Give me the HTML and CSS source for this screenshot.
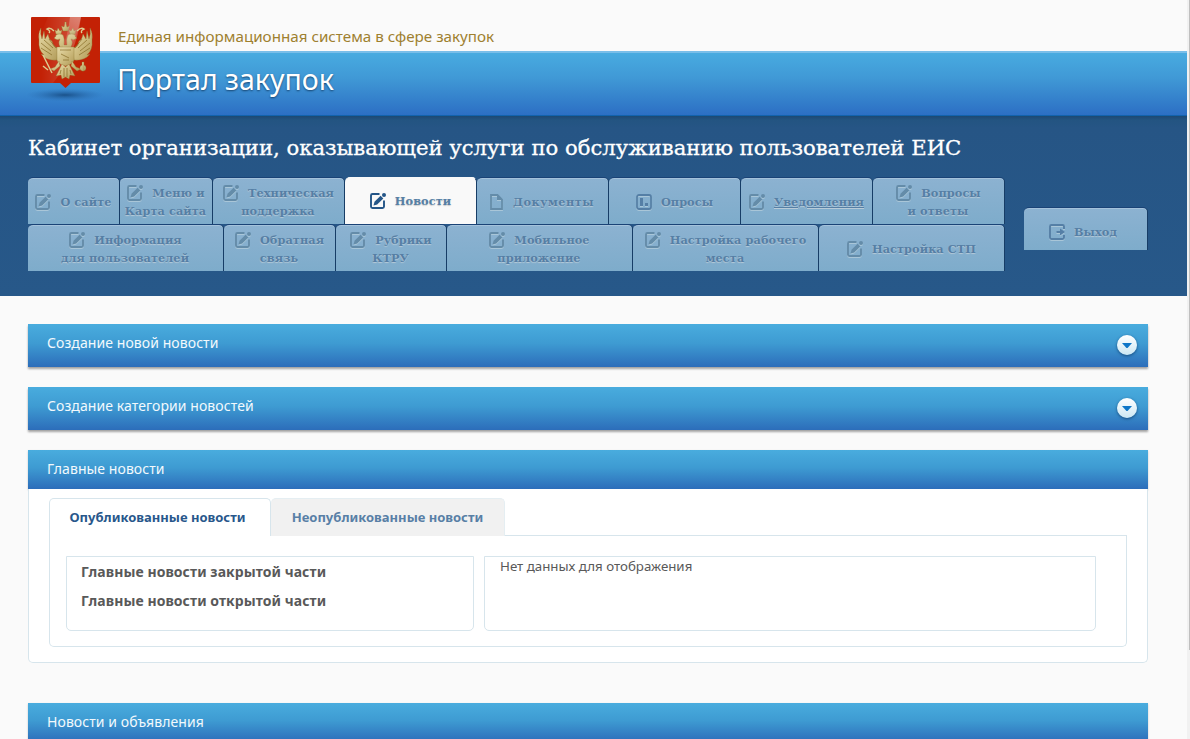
FILE: index.html
```
<!DOCTYPE html>
<html lang="ru">
<head>
<meta charset="utf-8">
<title>Портал закупок</title>
<link rel="stylesheet" href="styles.css">
</head>
<body>
<svg class="defs" width="0" height="0">
  <defs>
    <symbol id="edit" viewBox="0 0 18 18">
      <path d="M10.500 2H3.500Q2 2 2 3.500V14.500Q2 16 3.500 16H13.500Q15 16 15 14.500V8.500" fill="none" stroke="currentColor" stroke-width="1.900"/>
      <path d="M4.500 13.500L5.500 9.800L11.600 3.700L14.300 6.400L8.200 12.500Z" fill="currentColor"/>
      <circle cx="15" cy="3" r="2" fill="currentColor"/>
    </symbol>
    <symbol id="doc" viewBox="0 0 13 18">
      <path d="M1 2H7.500L12 6.500V16H1Z" fill="none" stroke="currentColor" stroke-width="1.800"/>
      <path d="M7 2V7H12Z" fill="currentColor"/>
    </symbol>
    <symbol id="poll" viewBox="0 0 18 18">
      <rect x="2" y="2" width="14" height="14" rx="2" fill="none" stroke="currentColor" stroke-width="1.800"/>
      <path d="M5 5H8V13H5ZM10 10H13V13H10Z" fill="currentColor"/>
    </symbol>
    <symbol id="exit" viewBox="0 0 18 18">
      <path d="M16 6V3.500Q16 2 14.500 2H3.500Q2 2 2 3.500V14.500Q2 16 3.500 16H14.500Q16 16 16 14.500V12" fill="none" stroke="currentColor" stroke-width="1.900"/>
      <path d="M8.500 8H12V5.500L17 9L12 12.500V10H8.500Z" fill="currentColor"/>
    </symbol>
    <linearGradient id="gold" x1="0" y1="0" x2="1" y2="1">
      <stop offset="0" stop-color="#e6daa8"/><stop offset=".5" stop-color="#cfbd80"/><stop offset="1" stop-color="#b09a58"/>
    </linearGradient>
    <linearGradient id="gloss" x1="0" y1="0" x2="0" y2="1">
      <stop offset="0" stop-color="#fff" stop-opacity=".5"/><stop offset="1" stop-color="#fff" stop-opacity=".05"/>
    </linearGradient>
    <linearGradient id="beam" x1="0" y1="0" x2="1" y2="0">
      <stop offset=".2" stop-color="#fff" stop-opacity="0"/><stop offset="1" stop-color="#fff" stop-opacity=".4"/>
    </linearGradient>
    <radialGradient id="shade">
      <stop offset="0" stop-color="#174c83" stop-opacity=".9"/><stop offset="1" stop-color="#2c6fb5" stop-opacity="0"/>
    </radialGradient>
  </defs>
</svg>

<div class="screen">
  <div class="page">
    <header class="header">
      <p class="system">Единая информационная система в сфере закупок</p>
      <p class="portal">Портал закупок</p>
      <svg class="emblem" width="80" height="84" viewBox="0 0 80 84">
        <ellipse cx="39" cy="78" rx="39" ry="6.500" fill="url(#shade)"/>
        <path d="M6 0H73Q74 0 74 1V65Q74 66 73 66H45L39.500 71L34 66H6Q5 66 5 65V1Q5 0 6 0Z" fill="#c32105"/>
        <path d="M22 0H55Q50 38 27 66H5V40Z" fill="url(#beam)" opacity=".6"/>
        <g fill="url(#gold)" stroke="#8d7430" stroke-width=".35">
          <path d="M33 31Q27 31 26 24Q23 23 22 17L19 22L18 14L16 22Q14 17 15 11Q12 16 13 23Q12 33 18 38L15 37Q20 44 31 43Z"/>
          <path d="M46 31Q52 31 53 24Q56 23 57 17L60 22L61 14L63 22Q65 17 64 11Q67 16 66 23Q67 33 61 38L64 37Q59 44 48 43Z"/>
          <path d="M36 33Q31 27 34 22Q31 24 28 21Q30 20 30 18Q33 15 37 18Q39 22 38 28H41Q40 22 42 18Q46 15 49 18Q49 20 51 21Q48 24 45 22Q48 27 43 33Z"/>
          <path d="M31 30H48V43Q47 47 39.500 49Q32 47 31 43Z"/>
          <path d="M36 47L39.500 50L43 47L49 59L44 58L43 62L39.500 60L36 62L35 58L30 59Z"/>
          <path d="M33 44L29 50L24 52L28 54L34 49ZM46 44L50 50L55 52L51 54L45 49Z"/>
          <circle cx="57" cy="51" r="3"/><path d="M56 45H58V54H56Z"/>
          <path d="M37 14L35.500 9L38 10L38.800 7V5H40.200V7L41 10L43.500 9L42 14Z"/>
          <path d="M30 17L29 13L31 14L32 11L34 14L36 13L35 17ZM44 17L43 13L45 14L47 11L48 14L50 13L49 17Z"/>
        </g>
        <g fill="none" stroke="#dccb91">
          <path d="M17 38L26 56M22 53L17 49" stroke-width="1.500"/>
          <path d="M28 14Q24 10 21 12Q25 14 23 16M51 14Q55 10 58 12Q54 14 56 16" stroke-width="1.400"/>
        </g>
        <g fill="none" stroke="#8d7430" stroke-width=".8">
          <path d="M15 26L25 34M15 31L26 38M18 23L27 31M23 22L30 31M64 26L54 34M64 31L53 38M61 23L52 31M56 22L49 31M34 33H45M35 37L43 41M37 43H43M38 51V60M41 51V60M35 53L34 57M44 53L45 57"/>
        </g>
        <path d="M44 0H55Q51 19 44 32L34 36Q42 20 44 0Z" fill="url(#gloss)" opacity=".55"/>
      </svg>
    </header>

    <section class="cabinet">
      <h1 class="cabinet-title">Кабинет организации, оказывающей услуги по обслуживанию пользователей ЕИС</h1>
      <div class="cabinet-body">
        <nav class="menu">
          <div class="menu-row first">
            <a class="tab"><span class="line"><svg class="icon"><use href="#edit"/></svg>О сайте</span></a>
            <a class="tab"><span class="line"><svg class="icon"><use href="#edit"/></svg>Меню и</span><span class="line">Карта сайта</span></a>
            <a class="tab"><span class="line"><svg class="icon"><use href="#edit"/></svg>Техническая</span><span class="line">поддержка</span></a>
            <a class="tab active"><span class="line"><svg class="icon"><use href="#edit"/></svg>Новости</span></a>
            <a class="tab wide"><span class="line"><svg class="icon narrow"><use href="#doc"/></svg>Документы</span></a>
            <a class="tab"><span class="line"><svg class="icon dark"><use href="#poll"/></svg>Опросы</span></a>
            <a class="tab"><span class="line"><svg class="icon"><use href="#edit"/></svg><u>Уведомления</u></span></a>
            <a class="tab"><span class="line"><svg class="icon"><use href="#edit"/></svg>Вопросы</span><span class="line">и ответы</span></a>
          </div>
          <div class="menu-row second">
            <a class="tab"><span class="line"><svg class="icon"><use href="#edit"/></svg>Информация</span><span class="line">для пользователей</span></a>
            <a class="tab"><span class="line"><svg class="icon"><use href="#edit"/></svg>Обратная</span><span class="line">связь</span></a>
            <a class="tab"><span class="line"><svg class="icon"><use href="#edit"/></svg>Рубрики</span><span class="line">КТРУ</span></a>
            <a class="tab"><span class="line"><svg class="icon"><use href="#edit"/></svg>Мобильное</span><span class="line">приложение</span></a>
            <a class="tab"><span class="line"><svg class="icon"><use href="#edit"/></svg>Настройка рабочего</span><span class="line">места</span></a>
            <a class="tab"><span class="line"><svg class="icon"><use href="#edit"/></svg>Настройка СТП</span></a>
          </div>
        </nav>
        <a class="tab logout"><span class="line"><svg class="icon dark"><use href="#exit"/></svg>Выход</span></a>
      </div>
    </section>

    <main class="content">
      <section class="bar"><h2>Создание новой новости</h2><button class="toggle"><svg width="10" height="5" viewBox="0 0 10 5"><path d="M0 0H10L6 4.500Q5 5.500 4 4.500Z" fill="#0d76c8"/></svg></button></section>
      <section class="bar"><h2>Создание категории новостей</h2><button class="toggle"><svg width="10" height="5" viewBox="0 0 10 5"><path d="M0 0H10L6 4.500Q5 5.500 4 4.500Z" fill="#0d76c8"/></svg></button></section>
      <section class="panel">
        <div class="bar open"><h2>Главные новости</h2></div>
        <div class="panel-body">
          <div class="news-tabs">
            <span class="news-tab current">Опубликованные новости</span>
            <span class="news-tab">Неопубликованные новости</span>
            <span class="rule"></span>
          </div>
          <div class="news">
            <div class="box list"><p>Главные новости закрытой части</p><p>Главные новости открытой части</p></div>
            <div class="box empty">Нет данных для отображения</div>
          </div>
        </div>
      </section>
      <section class="bar open"><h2>Новости и объявления</h2></section>
    </main>
  </div>
  <div class="scrollbar"><div class="thumb"></div></div>
</div>
</body>
</html>
```
FILE: styles.css
```
* { box-sizing: border-box; }
body, h1, h2, p { margin: 0; }
body {
  height: 739px;
  overflow: hidden;
  background: #fafafa;
  font-family: "Noto Sans", "Open Sans", sans-serif;
}
.defs { position: absolute; }
.screen { display: flex; height: 739px; overflow: hidden; }
.page { flex: 1; }
.scrollbar { width: 3px; height: 739px; padding-left: 2px; background: #f1f1f1; }
.thumb { height: 650px; background: #bfbfbf; }

.header { position: relative; height: 116px; padding-left: 118px; }
.system {
  height: 51px;
  padding-top: 24px;
  color: #9e802f;
  font-size: 15.2px;
  line-height: 24px;
}
.portal {
  height: 65px;
  margin-left: -118px;
  padding: 6px 0 0 117px;
  border-top: 2px solid #79bee9;
  border-bottom: 1px solid #1263ad;
  background: linear-gradient(#48abe0, #4099d6 40%, #2c6fc4);
  color: #fff;
  font-size: 28.5px;
  line-height: 40px;
  text-shadow: 0 1px 2px #174570;
}
.emblem { position: absolute; left: 26px; top: 17px; }

.cabinet {
  height: 180px;
  padding: 17px 0 0 28px;
  background: linear-gradient(#1c4974, #235481 4px, #265585 12px, #275889);
}
.cabinet-title {
  color: #fff;
  font: 400 21.2px/30px "DejaVu Serif", serif;
  letter-spacing: -.02px;
  -webkit-text-stroke: .3px #fff;
}
.cabinet-body { display: flex; gap: 19px; padding-top: 14px; }
.menu { width: 977px; }
.menu-row { display: grid; height: 47px; }
.first { grid-template-columns: 92px 93px repeat(6, 132px); }
.second { grid-template-columns: 196px 112px 111px repeat(3, 186px); }
.tab {
  display: flex;
  flex-direction: column;
  align-items: center;
  justify-content: center;
  padding-top: 1px;
  border-top: 1px solid #1a4376;
  border-right: 1px solid #173d66;
  border-radius: 5px 5px 0 0;
  background: linear-gradient(#8cb2d1, #7eaccb);
  box-shadow: inset 0 1px #a4c2db;
  color: #567fa5;
  font: 700 11.3px/18px "DejaVu Serif", serif;
  letter-spacing: .08px;
  text-shadow: 0 1px 1px #b8cbd8;
  white-space: nowrap;
}
.line { display: flex; align-items: center; gap: 8px; height: 18px; padding-right: 1px; }
.icon { width: 18px; height: 18px; color: #648ca9; filter: drop-shadow(0 1px 0 #a9c6d8); }
.icon.narrow { width: 13px; margin-right: 2px; }
.icon.dark { color: #557fa6; }
.active { background: #f9f9f9; box-shadow: none; border-top-color: #f9f9f9; text-shadow: 0 1px 1px #ccc; padding-bottom: 2px; }
.active .icon { color: #245587; filter: none; }
.wide { letter-spacing: .5px; }
.logout { width: 124px; height: 43px; margin-top: 30px; padding: 5px 5px 0 0; }

.content { width: 1148px; padding: 28px 0 0 28px; }
.bar {
  display: flex;
  justify-content: space-between;
  height: 43px;
  margin-bottom: 20px;
  padding: 0 11px 0 19px;
  background: linear-gradient(#49acde, #3e9bd2 45%, #2c6dba);
  box-shadow: 0 2px 2px rgba(0, 0, 0, .35);
}
.bar h2 { color: #f2f9fd; font-size: 14px; font-weight: 400; line-height: 37px; letter-spacing: .08px; }
.toggle {
  display: grid;
  place-items: center;
  width: 20px;
  height: 20px;
  margin-top: 11px;
  padding: 0;
  border: 0;
  border-radius: 50%;
  background: linear-gradient(#fff, #cbe7f3);
  box-shadow: 0 1px 3px #174c7d;
}
.bar.open { height: 39px; margin: 0; box-shadow: 0 1px 2px rgba(0, 0, 0, .2); }
.panel { margin-bottom: 40px; }
.panel-body {
  position: relative;
  height: 174px;
  padding: 9px 20px 15px;
  border: 1px solid #d7e5ec;
  border-top: 0;
  border-radius: 0 0 5px 5px;
  background: #fff;
}
.news-tabs { display: flex; height: 38px; }
.news-tab {
  width: 234px;
  border: 1px solid #e5eef2;
  border-bottom: 0;
  border-left: 0;
  border-radius: 5px 5px 0 0;
  background: #f1f1f1;
  color: #587fa6;
  font-size: 13px;
  font-weight: 700;
  line-height: 37px;
  text-align: center;
}
.news-tab.current { width: 222px; border: 1px solid #d7e5ec; border-bottom: 0; background: #fff; color: #28578b; padding-right: 5px; }
.rule { flex: 1; border-bottom: 1px solid #d7e5ec; }
.news {
  display: flex;
  gap: 10px;
  height: 111px;
  padding: 20px 30px 15px 16px;
  border: 1px solid #d7e5ec;
  border-top: 0;
  border-radius: 0 0 5px 5px;
}
.box { height: 75px; border: 1px solid #d7e5ec; border-radius: 0 0 5px 5px; padding-left: 15px; }
.list { width: 408px; padding-left: 14px; color: #595959; font-size: 14px; font-weight: 700; line-height: 29px; letter-spacing: .07px; }
.empty { width: 612px; color: #595959; font-size: 13.3px; line-height: 18px; }
```
